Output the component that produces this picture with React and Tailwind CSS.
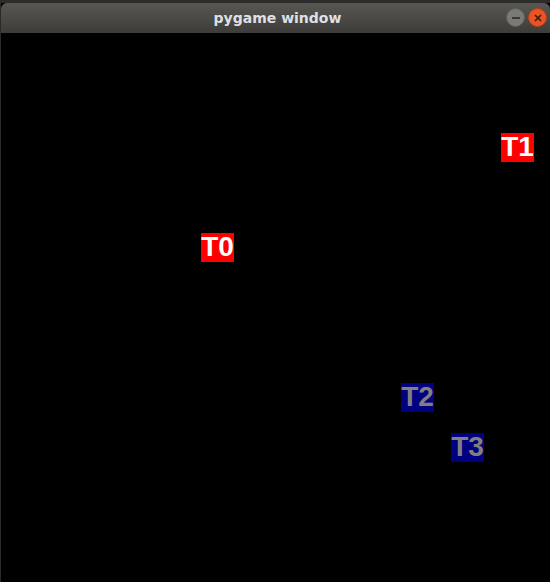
import React from "react";

const SPRITES = [
  { id: "T0", x: 200, y: 200, bg: "bg-[#ff0000]", fg: "text-white" },
  { id: "T1", x: 500, y: 100, bg: "bg-[#ff0000]", fg: "text-white" },
  { id: "T2", x: 400, y: 350, bg: "bg-[#000080]", fg: "text-[#808080]" },
  { id: "T3", x: 450, y: 400, bg: "bg-[#000080]", fg: "text-[#808080]" },
];

export default function App() {
  return (
    <div className="w-[550px] h-[582px] bg-[#2a2a28] flex flex-col overflow-hidden">
      <div className="h-[3px] bg-[#2c2c2a]" />
      <div className="flex-1 flex flex-col ml-[1px] bg-black">
        <div className="h-[30px] rounded-t-[6px] bg-gradient-to-b from-[#595752] to-[#3d3c38] flex items-center relative">
          <span
            className="flex-1 text-center text-[14px] font-bold text-[#dfe0e6] pl-[4px]"
            style={{ fontFamily: '"DejaVu Sans", sans-serif' }}
          >
            pygame window
          </span>
          <div className="absolute right-[3px] top-[5px] flex gap-[3px]">
            <div className="w-[19px] h-[19px] rounded-full bg-[#7a7a77] border border-[#5e5d5a] flex items-center justify-center">
              <div className="w-[8px] h-[2px] bg-[#3a3a38]" />
            </div>
            <div className="w-[19px] h-[19px] rounded-full bg-[#ea5323] border border-[#b8401a] flex items-center justify-center">
              <svg width="8" height="8" viewBox="0 0 8 8">
                <path d="M1 1L7 7M7 1L1 7" stroke="#3b1a0c" strokeWidth="1.6" />
              </svg>
            </div>
          </div>
        </div>
        <div className="flex-1 relative bg-black">
          {SPRITES.map((s) => (
            <div
              key={s.id}
              className={`absolute w-[33px] h-[29px] flex items-center justify-center pb-[2px] ${s.bg} ${s.fg} text-[28px] font-bold leading-none`}
              style={{ left: s.x, top: s.y, fontFamily: '"Liberation Sans", Arial, sans-serif' }}
            >
              {s.id}
            </div>
          ))}
        </div>
      </div>
    </div>
  );
}
